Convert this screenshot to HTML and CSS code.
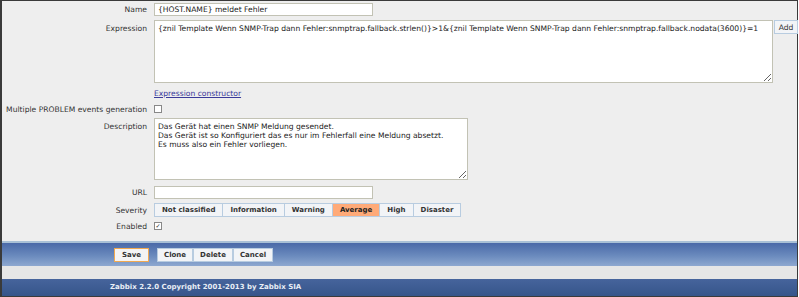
FILE: index.html
```html
<!DOCTYPE html>
<html lang="en">
<head>
    <meta charset="UTF-8">
    <title>Trigger</title>
    <link rel="stylesheet" href="styles.css">
</head>
<body>
    <div class="frame">
        <div class="form">
            <label class="label">Name</label>
            <div class="field"><input type="text" class="text-input" value="{HOST.NAME} meldet Fehler"></div>

            <label class="label top">Expression</label>
            <div class="field expr">
                <textarea class="area expr-area">{znil Template Wenn SNMP-Trap dann Fehler:snmptrap.fallback.strlen()}>1&amp;{znil Template Wenn SNMP-Trap dann Fehler:snmptrap.fallback.nodata(3600)}=1</textarea>
                <button class="btn add-btn">Add</button>
            </div>

            <span class="label"></span>
            <div class="field"><a href="#" class="link">Expression constructor</a></div>

            <label class="label">Multiple PROBLEM events generation</label>
            <div class="field"><span class="check"></span></div>

            <label class="label top">Description</label>
            <div class="field"><textarea class="area desc-area">Das Gerät hat einen SNMP Meldung gesendet.
Das Gerät ist so Konfiguriert das es nur im Fehlerfall eine Meldung absetzt.
Es muss also ein Fehler vorliegen.</textarea></div>

            <label class="label bottom">URL</label>
            <div class="field bottom"><input type="text" class="text-input"></div>

            <label class="label">Severity</label>
            <div class="field">
                <div class="severity">
                    <span class="sev">Not classified</span>
                    <span class="sev">Information</span>
                    <span class="sev">Warning</span>
                    <span class="sev active">Average</span>
                    <span class="sev">High</span>
                    <span class="sev">Disaster</span>
                </div>
            </div>

            <label class="label">Enabled</label>
            <div class="field"><span class="check">&#10003;</span></div>
        </div>

        <div class="actions">
            <button class="btn main save">Save</button>
            <div class="btn-group">
                <button class="btn main">Clone</button>
                <button class="btn main">Delete</button>
                <button class="btn main">Cancel</button>
            </div>
        </div>
        <div class="gap"></div>
        <div class="footer">Zabbix 2.2.0 Copyright 2001-2013 by Zabbix SIA</div>
    </div>
</body>
</html>
```

FILE: styles.css
```css
body {
    margin: 0;
    font-family: "DejaVu Sans", Verdana, sans-serif;
    font-size: 7.6px;
    color: #1a1a1a;
    background: #fff;
}
.frame {
    width: 795px;
    height: 295px;
    border: 1px solid #3a3a3a;
    border-left: 2px solid #3a3a3a;
    background: #eeeeee;
    display: flex;
    flex-direction: column;
}
.form {
    display: grid;
    grid-template-columns: 145px 1fr;
    /* name, expression, link, multiple, description, url, severity, enabled */
    grid-template-rows: 13px 63px 13px 10px 62px 15px 14px 10px;
    column-gap: 7px;
    row-gap: 4px;
    padding-top: 2px;
    height: 241px;
    box-sizing: border-box;
}
.label {
    text-align: right;
    color: #333;
    align-self: center;
    line-height: 9px;
}
.label.top {
    align-self: start;
    padding-top: 4px;
}
.label.bottom {
    align-self: end;
    padding-bottom: 2px;
}
.field {
    display: flex;
    align-items: center;
}
.field.bottom {
    align-items: flex-end;
}
.text-input {
    width: 219px;
    height: 13px;
    box-sizing: border-box;
    border: 1px solid #c2c2b4;
    background: #fff;
    font: inherit;
    color: #1a1a1a;
    padding: 0 3px;
    margin: 0;
}
.area {
    box-sizing: border-box;
    border: 1px solid #c2c2b4;
    background: #fff;
    font: inherit;
    line-height: 9px;
    color: #1a1a1a;
    padding: 3px 3px;
    margin: 0;
}
.expr {
    align-items: flex-start;
    gap: 1px;
}
.expr-area {
    width: 619px;
    height: 63px;
}
.desc-area {
    width: 314px;
    height: 62px;
}
.link {
    color: #3a3a9a;
    text-decoration: underline;
    line-height: 9px;
}
.check {
    display: inline-block;
    width: 6px;
    height: 6px;
    border: 1px solid #888;
    background: #fff;
    font-size: 6px;
    line-height: 6px;
    text-align: center;
    color: #222;
}
.severity {
    display: flex;
    border: 1px solid #b8cce0;
}
.sev {
    padding: 0 7px;
    height: 12px;
    line-height: 12px;
    font-size: 7px;
    font-weight: bold;
    color: #333;
    background: #f2f4f7;
    border-left: 1px solid #b8cce0;
}
.sev:first-child {
    border-left: none;
}
.sev.active {
    background: #ffaa78;
    color: #222;
}
.btn {
    font: inherit;
    font-weight: bold;
    color: #333;
    background: #f2f4f7;
    border: 1px solid #b8cce0;
    height: 14px;
    padding: 0 5px;
    margin: 0;
}
.add-btn {
    font-weight: normal;
    width: 24px;
    padding: 0;
}
.actions {
    height: 23px;
    border-top: 2px solid #a9c0d6;
    background: linear-gradient(#4a69a8, #6a8abd 55%, #8ea8d0);
    display: flex;
    align-items: center;
    gap: 8px;
    padding-left: 112px;
}
.btn.main {
    height: 14px;
    padding: 0 6px;
    font-size: 7px;
}
.btn.save {
    border-color: #f0a850;
    background: #f4f4f4;
    width: 35px;
}
.btn-group {
    display: flex;
}
.gap {
    height: 13px;
    background: #e6e6e6;
}
.footer {
    flex: 1;
    background: linear-gradient(#46649c, #36558a);
    color: #e8eef6;
    font-weight: bold;
    font-size: 7px;
    line-height: 17px;
    padding-left: 108px;
}
```
